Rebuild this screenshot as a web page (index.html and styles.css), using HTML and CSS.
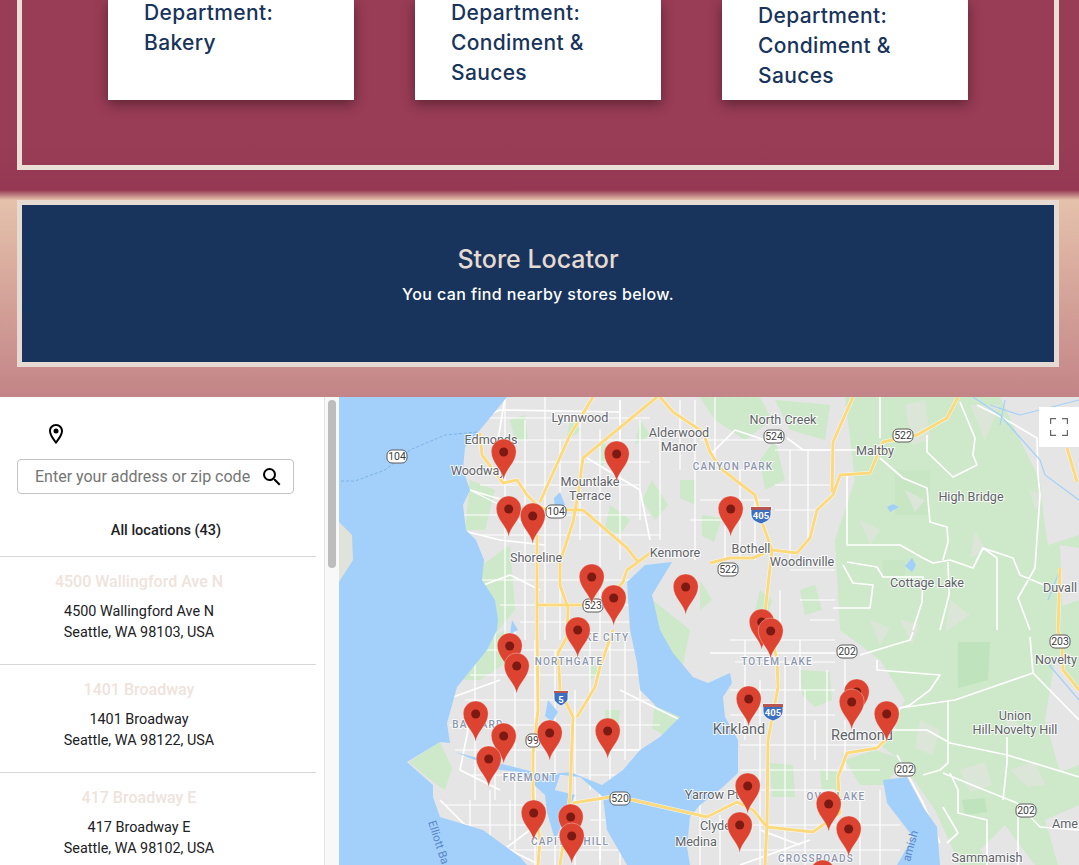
FILE: index.html
```html
<!DOCTYPE html>
<html lang="en">
<head>
<meta charset="utf-8">
<title>Store Locator</title>
<link rel="stylesheet" href="styles.css">
</head>
<body>
<section class="departments">
  <div class="dept-frame">
    <div class="card"><p class="card-text">Department:<br>Bakery</p></div>
    <div class="card"><p class="card-text">Department:<br>Condiment &amp;<br>Sauces</p></div>
    <div class="card"><p class="card-text card-text-low">Department:<br>Condiment &amp;<br>Sauces</p></div>
  </div>
</section>
<section class="locator">
  <div class="locator-frame">
    <h2 class="locator-title">Store Locator</h2>
    <p class="locator-sub">You can find nearby stores below.</p>
  </div>
</section>
<section class="app">
  <aside class="panel">
    <div class="panel-main">
      <div class="panel-pin">
        <svg class="pin-icon" viewBox="0 0 24 24"><path d="M12 2C8.13 2 5 5.13 5 9c0 5.25 7 13 7 13s7-7.75 7-13c0-3.87-3.13-7-7-7zM7 9c0-2.76 2.24-5 5-5s5 2.24 5 5c0 2.88-2.88 7.19-5 9.88C9.92 16.21 7 11.85 7 9z"/><circle cx="12" cy="9" r="2.5"/></svg>
      </div>
      <div class="search">
        <span class="search-text">Enter your address or zip code</span>
        <svg class="search-icon" viewBox="0 0 24 24"><path d="M15.5 14h-.79l-.28-.27A6.47 6.47 0 0 0 16 9.5 6.5 6.5 0 1 0 9.5 16c1.61 0 3.09-.59 4.23-1.57l.27.28v.79l5 4.99L20.49 19l-4.99-5zm-6 0C7.01 14 5 11.99 5 9.5S7.01 5 9.5 5 14 7.01 14 9.5 11.99 14 9.5 14z"/></svg>
      </div>
      <div class="all-locations">All locations (43)</div>
      <ul class="stores">
        <li class="store"><h3 class="store-name">4500 Wallingford Ave N</h3><p class="store-address">4500 Wallingford Ave N<br>Seattle, WA 98103, USA</p></li>
        <li class="store"><h3 class="store-name">1401 Broadway</h3><p class="store-address">1401 Broadway<br>Seattle, WA 98122, USA</p></li>
        <li class="store"><h3 class="store-name">417 Broadway E</h3><p class="store-address">417 Broadway E<br>Seattle, WA 98102, USA</p></li>
      </ul>
    </div>
    <div class="scrolltrack"><div class="scrollthumb"></div></div>
  </aside>
  <div class="map">
    <svg class="map-svg" viewBox="339 397 740 468">
      <defs>
        <g id="pin">
          <path class="pin-body" d="M0 0C-1.5-11-12.5-17-12.5-28.5A12.5 12.5 0 1 1 12.5-28.5C12.5-17 1.5-11 0 0Z"/>
          <circle class="pin-dot" cx="0" cy="-28" r="4.5"/>
        </g>
      </defs>
      <rect class="land" x="339" y="397" width="740" height="468"/>

      <!-- parks and forest -->
      <path class="green" d="M845 397H1000L1020 440L1040 480L1079 500V865H960L935 810L900 760L880 745L905 700L880 660L840 630L835 540L855 480Z"/>
      <path class="green" d="M700 397H760L772 420L745 440L715 420Z"/>
      <path class="green" d="M775 400L830 405L825 440L790 430Z"/>
      <path class="green" d="M800 590L815 585L822 610L805 615ZM760 590L772 600L765 625L755 610Z"/>
      <path class="green" d="M800 670L830 672L832 700L815 707L802 695Z"/>
      <path class="green" d="M770 763L793 765L795 797L772 797ZM820 770L838 772L838 790L822 790Z"/>
      <path class="green" d="M875 750L905 760L885 785L860 785L845 760Z"/>
      <path class="green" d="M640 590L690 630L680 680L660 640Z"/>
      <path class="green" d="M470 480L495 490L485 530L465 530Z"/>
      <path class="green" d="M475 570L510 545L515 610L490 640L478 600Z"/>
      <path class="green" d="M485 640L505 630L510 660L480 680L462 680Z"/>
      <path class="green" d="M409 762L440 742L452 768L445 790L437 785Z"/>
      <path class="green" d="M590 660L600 672L590 680Z"/>
      <path class="green" d="M605 710L620 710L618 730L606 728Z"/>
      <path class="green" d="M655 700L682 716L668 738L652 728Z"/>
      <path class="green" d="M510 420L525 415L528 440L515 440ZM570 420L582 430L566 440ZM610 505L630 520L620 535L605 528ZM600 440L612 450L600 470ZM652 480L668 505L655 520L642 500ZM680 480L695 480L695 505L680 498Z"/>
      <path class="green" d="M640 420L650 435L635 445ZM700 580L712 600L700 610ZM702 515L722 518L714 542L702 536ZM760 460L775 440L785 480L765 490Z"/>
      <path class="deep" d="M958 642H990L988 680L958 688Z"/>
      <path class="deep-soft" d="M895 470L930 470L930 515L895 515Z"/>
      <path class="deep-soft" d="M883 560L905 560L905 575L883 578Z"/>
      <path class="deep" d="M962 800L985 798L987 812L965 815Z"/>

      <!-- open land patches on the forest -->
      <path class="patch" d="M905 405L925 400L930 440L912 445ZM970 405L1000 405L985 440ZM860 520L880 530L870 545ZM975 530L985 550L970 558ZM900 620L920 625L912 645ZM950 600L970 615L945 632ZM960 770L985 762L992 785L970 792ZM920 720L940 730L932 755L915 748ZM1010 770L1035 762L1045 785L1028 787ZM1030 490L1045 496L1035 510ZM905 490L925 500L915 512ZM870 620L890 628L880 645ZM1005 715L1020 725L1008 732Z"/>
      <path class="land" d="M1040 480L1079 500V535L1048 545L1044 520ZM1060 545L1079 548V600L1062 606ZM1055 660L1079 690V765L1060 772L1045 720ZM980 850L1005 825L1035 865H990ZM1045 820L1079 805V865H1058ZM880 830L910 805L905 865H880Z"/>

      <!-- local streets -->
      <path class="street" d="M480 418H650M470 440H660M500 462H650M480 485H640M460 515H650M480 535H660M470 580H640M500 605H640M520 622H640M505 397V640M525 420V640M545 397V640M560 440V640M580 420V540M600 430V640M620 400V560M640 420V520M660 430V540M680 400V470M695 400V560M715 397V470M470 490L500 505L530 530M700 470H770M700 440H770M690 520L740 520M740 470V560M755 500V560M725 500V560M700 500H770M790 450V560M808 450V540M775 450H835M775 485H830M775 510H815"/>
      <path class="street" d="M455 650H660M470 675H650M465 700H655M450 725H660M455 750H650M470 775H640M445 805H540M440 825H530M510 850H640M475 640V800M495 630V800M515 630V850M535 640V865M555 650V865M575 690V865M590 640V790M610 640V800M625 640V760M640 660V750M470 800V830M490 790V840M510 800V840M600 800V865M620 800V865M590 820H640"/>
      <path class="street" d="M730 640H835M735 662H835M730 690H835M730 715H835M740 745H880M740 770H880M740 790H835M740 825H900M740 850H900M760 680V865M785 660V865M805 690V865M827 670V780M845 660V700M845 720V770M860 790V865M880 790V865M745 640V740M800 640V690M680 820V865M700 800V865M720 815V865M815 720V760M790 570H835M800 600H835M810 620H835M780 590V640"/>
      <path class="arterial" d="M787 438L803 450H857M880 397V438M927 435V452L953 477L977 465L973 455L975 438L960 402M880 458L903 478L927 488L930 522L947 527L948 542L943 560M847 473V545H900L923 558L933 563L950 560L973 568L983 548L997 558V630M983 548L1013 558L1020 575L1044 585M977 405L1003 418L1037 438L1038 475L1040 495L1035 568L1018 598L1030 630M847 562L877 567L883 577H923L922 602L913 630M948 562L949 595L940 630M843 565L853 583L873 585L870 608H833"/>
      <path class="arterial" d="M710 653H837M860 655L910 640L913 632M877 660V670L940 675L930 690L910 705L900 708L893 730H927L950 743L1007 755L1050 768L1079 777M900 708L955 700L1033 673M948 700V763L940 770L923 775M943 773L977 787L1017 803L1040 827L1079 830M950 773L958 790V813L987 820V865M958 833L943 807M958 833L947 843M1007 737V763L1003 800M1030 637L1033 673L1079 720M1018 817V865M897 755L923 803L940 843"/>
      <path class="arterial" d="M480 418L500 410L620 412M505 397L498 440M460 530L500 540L545 545M587 458L640 490L650 540M620 400V470M470 590L510 575L540 590M503 500L470 490M710 455L735 430L780 445M445 700L500 680M470 720L460 770L500 790M600 790V860M440 800L470 830L540 865M530 830L490 860M620 690L680 720M605 750H660M640 810L690 820M670 670L710 690M810 840L740 865M760 830L800 845"/>

      <!-- water -->
      <path class="water" d="M339 397H507L480 430L465 447L463 470L470 490L463 505L466 530L476 540L484 560L482 580L495 600L498 620L497 630L487 650L457 687L447 723L450 743L440 742L407 762L433 785L433 797L440 817L483 830L520 857L527 865H339Z"/>
      <path class="island" d="M339 522L352 535L353 560L339 582Z"/>
      <path class="water" d="M627 582L645 565L672 562L652 595L655 608L660 630L673 653L693 677L708 683L730 673L732 683L723 697L725 717L738 740L738 773L723 787L700 805L690 817L687 847L690 865H627L607 830L603 797L580 777L560 775L555 790L575 795L555 840L547 812L545 795L520 772L500 770L475 760L455 752L470 756L510 766L545 775L570 772L602 785L623 770L640 750L660 737L680 717L657 707L640 690L637 663L630 630Z"/>
      <path class="water" d="M883 780L907 777L923 807L937 827L940 865H897L913 837L887 803Z"/>
      <path class="water" d="M548 700L558 712L552 722L545 716Z"/>
      <path class="water" d="M560 492L565 505L555 512L554 498ZM512 620L518 630L510 634ZM887 507L893 504L899 507L890 512ZM912 558L916 565L912 572L905 566Z"/>
      <path class="river" d="M973 397L1000 415L1040 460L1045 475L1079 500M990 405L1020 415L1079 400M1060 570L1048 600M1000 425L1005 400M1045 660L1079 700"/>
      <path class="ferry" d="M341 481H355L385 470L410 450L445 435L478 432"/>

      <!-- highways -->
      <path class="hwy-edge" d="M657 397L583 458L578 495L573 522L560 562L560 585L568 608L567 637L558 653L560 690L573 717L570 797L560 865M537 535V630L538 710L533 753V797L540 840L538 865M480 433L482 455L503 483L517 480L527 495L537 505L547 510H583L627 548L638 562L650 553M537 605H583M660 397L673 412L703 432L710 452L720 468L755 495L763 525L772 550L767 595L765 612L777 660L778 687L768 740L767 823L765 865M710 563L730 558L753 558L772 550L797 553L810 538L817 510L833 495L840 475L870 473L883 442L917 435L947 418L958 397M853 397L833 442L832 492M573 803L610 797L633 800L707 817L737 802L753 810L767 827L813 832L840 813L838 777L847 753L877 748L885 740M1067 448L1077 482M1060 568L1058 630L1062 647L1063 670L1079 690M613 630L600 667L595 687L577 717M583 605H603L623 582L627 570L638 562M593 397L570 435L540 502"/>
      <path class="hwy" d="M657 397L583 458L578 495L573 522L560 562L560 585L568 608L567 637L558 653L560 690L573 717L570 797L560 865M537 535V630L538 710L533 753V797L540 840L538 865M480 433L482 455L503 483L517 480L527 495L537 505L547 510H583L627 548L638 562L650 553M537 605H583M660 397L673 412L703 432L710 452L720 468L755 495L763 525L772 550L767 595L765 612L777 660L778 687L768 740L767 823L765 865M710 563L730 558L753 558L772 550L797 553L810 538L817 510L833 495L840 475L870 473L883 442L917 435L947 418L958 397M853 397L833 442L832 492M573 803L610 797L633 800L707 817L737 802L753 810L767 827L813 832L840 813L838 777L847 753L877 748L885 740M1067 448L1077 482M1060 568L1058 630L1062 647L1063 670L1079 690M613 630L600 667L595 687L577 717M583 605H603L623 582L627 570L638 562M593 397L570 435L540 502"/>

      <!-- labels -->
      <g class="label">
        <text x="580" y="422">Lynnwood</text>
        <text x="491" y="444">Edmonds</text>
        <text x="478" y="475">Woodway</text>
        <text x="590" y="486">Mountlake</text>
        <text x="590" y="500">Terrace</text>
        <text x="679" y="437">Alderwood</text>
        <text x="679" y="451">Manor</text>
        <text x="783" y="424">North Creek</text>
        <text x="875" y="455">Maltby</text>
        <text x="971" y="501">High Bridge</text>
        <text x="927" y="587">Cottage Lake</text>
        <text x="802" y="566">Woodinville</text>
        <text x="751" y="553">Bothell</text>
        <text x="675" y="557">Kenmore</text>
        <text x="536" y="562">Shoreline</text>
        <text x="1060" y="592">Duvall</text>
        <text x="1056" y="664">Novelty</text>
        <text x="1015" y="720">Union</text>
        <text x="1015" y="734">Hill-Novelty Hill</text>
        <text x="712" y="799">Yarrow Pt</text>
        <text x="726" y="830">Clyde Hill</text>
        <text x="696" y="846">Medina</text>
        <text x="987" y="862">Sammamish</text>
        <text x="1065" y="828">Ame</text>
      </g>
      <g class="label label-big">
        <text x="739" y="734">Kirkland</text>
        <text x="862" y="740">Redmond</text>
      </g>
      <g class="hood">
        <text x="733" y="470">CANYON PARK</text>
        <text x="600" y="641">LAKE CITY</text>
        <text x="569" y="665">NORTHGATE</text>
        <text x="777" y="665">TOTEM LAKE</text>
        <text x="478" y="728">BALLARD</text>
        <text x="530" y="781">FREMONT</text>
        <text x="570" y="845">CAPITOL HILL</text>
        <text x="836" y="800">OVERLAKE</text>
        <text x="816" y="862">CROSSROADS</text>
      </g>
      <text class="water-label" transform="translate(428 822) rotate(72)">Elliott Ba</text>
      <text class="water-label" transform="translate(910 862) rotate(-75)">amish</text>

      <!-- route shields -->
      <g class="shield-box">
        <rect x="387" y="450" width="20" height="13" rx="5"/>
        <rect x="546" y="505" width="20" height="13" rx="5"/>
        <rect x="583" y="599" width="20" height="13" rx="5"/>
        <rect x="764" y="430" width="20" height="13" rx="5"/>
        <rect x="893" y="429" width="20" height="13" rx="5"/>
        <rect x="718" y="563" width="20" height="13" rx="5"/>
        <rect x="837" y="645" width="20" height="13" rx="5"/>
        <rect x="1050" y="635" width="20" height="13" rx="5"/>
        <rect x="895" y="763" width="20" height="13" rx="5"/>
        <rect x="1016" y="804" width="20" height="13" rx="5"/>
        <rect x="526" y="734" width="14" height="13" rx="5"/>
        <rect x="610" y="792" width="20" height="13" rx="5"/>
      </g>
      <g class="shield-text">
        <text x="397" y="460">104</text>
        <text x="556" y="515">104</text>
        <text x="593" y="609">523</text>
        <text x="774" y="440">524</text>
        <text x="903" y="439">522</text>
        <text x="728" y="573">522</text>
        <text x="847" y="655">202</text>
        <text x="1060" y="645">203</text>
        <text x="905" y="773">202</text>
        <text x="1026" y="814">202</text>
        <text x="533" y="744">99</text>
        <text x="620" y="802">520</text>
      </g>
      <g class="interstate">
        <path class="i-blue" d="M751 507H771V514C771 520 766 522 761 524C756 522 751 520 751 514Z"/>
        <path class="i-red" d="M751 507H771V510H751Z"/>
        <text x="761" y="519">405</text>
        <path class="i-blue" d="M554 691H568V698C568 702 564 704 561 706C558 704 554 702 554 698Z"/>
        <path class="i-red" d="M554 691H568V693H554Z"/>
        <text x="561" y="703">5</text>
        <path class="i-blue" d="M763 704H783V711C783 717 778 719 773 721C768 719 763 717 763 711Z"/>
        <path class="i-red" d="M763 704H783V707H763Z"/>
        <text x="773" y="716">405</text>
      </g>

      <!-- store pins -->
      <g transform="translate(.7 0)">
        <use href="#pin" x="856" y="720"/>
        <use href="#pin" x="851" y="730"/>
        <use href="#pin" x="886" y="742"/>
        <use href="#pin" x="503" y="480"/>
        <use href="#pin" x="616" y="482"/>
        <use href="#pin" x="508" y="537"/>
        <use href="#pin" x="532" y="544"/>
        <use href="#pin" x="591" y="605"/>
        <use href="#pin" x="613" y="626"/>
        <use href="#pin" x="685" y="615"/>
        <use href="#pin" x="730" y="537"/>
        <use href="#pin" x="761" y="650"/>
        <use href="#pin" x="770" y="659"/>
        <use href="#pin" x="577" y="658"/>
        <use href="#pin" x="509" y="674"/>
        <use href="#pin" x="516" y="694"/>
        <use href="#pin" x="475" y="742"/>
        <use href="#pin" x="503" y="764"/>
        <use href="#pin" x="488" y="787"/>
        <use href="#pin" x="549" y="761"/>
        <use href="#pin" x="607" y="759"/>
        <use href="#pin" x="533" y="841"/>
        <use href="#pin" x="570" y="845"/>
        <use href="#pin" x="571" y="864"/>
        <use href="#pin" x="748" y="727"/>
        <use href="#pin" x="747" y="814"/>
        <use href="#pin" x="739" y="853"/>
        <use href="#pin" x="828" y="832"/>
        <use href="#pin" x="822" y="901"/>
        <use href="#pin" x="848" y="857"/>
      </g>
    </svg>
    <button class="fullscreen" type="button" aria-label="Toggle fullscreen view">
      <svg class="fullscreen-icon" viewBox="0 0 18 18"><path d="M0 6V0H6M12 0H18V6M18 12V18H12M6 18H0V12"/></svg>
    </button>
  </div>
</section>
</body>
</html>
```

FILE: styles.css
```css
* { box-sizing: border-box; }
html, body { margin: 0; padding: 0; }
body {
  width: 1079px;
  height: 865px;
  overflow: hidden;
  background: #fff;
  font-family: "Roboto", "Liberation Sans", sans-serif;
}

/* Departments band, scrolled so that its top is out of the window */
.departments {
  height: 190px;
  padding: 0 20px 0 17px;
  background: linear-gradient(#993c56 0, #993c56 140px, #953853 100%);
}
.dept-frame {
  display: flex;
  gap: 61px;
  height: 170px;
  padding-left: 86px;
  border: 5px solid #e9dfd7;
  border-top: 0;
}
.card {
  width: 246px;
  height: 100px;
  padding-left: 36px;
  background: #fff;
  box-shadow: 0 4px 12px rgba(0, 0, 0, .4);
}
.card-text {
  margin: -2px 0 0;
  color: #18345c;
  font-family: "Inter", "Open Sans", sans-serif;
  font-size: 21px;
  font-weight: 500;
  letter-spacing: .35px;
  line-height: 30px;
}
.card-text-low { margin-top: 1px; }

/* Store locator heading */
.locator {
  height: 207px;
  padding: 10px 20px 0 17px;
  background: linear-gradient(#953853 0, #e5c1ab 10px, #c38487 100%);
}
.locator-frame {
  height: 167px;
  padding-top: 39px;
  border: 5px solid #e6dbd2;
  background: #18345c;
  text-align: center;
}
.locator-title {
  margin: 0;
  color: #e6dbd2;
  font-family: "Inter", "Open Sans", sans-serif;
  font-size: 25px;
  font-weight: 500;
  line-height: 30px;
}
.locator-sub {
  margin: 9px 0 0;
  color: #fff;
  font-family: "Inter", "Open Sans", sans-serif;
  font-size: 16px;
  font-weight: 500;
  letter-spacing: .4px;
  line-height: 22px;
}

/* App: list panel and map */
.app {
  display: flex;
  height: 468px;
}
.panel {
  display: flex;
  flex: 0 0 339px;
  height: 468px;
  overflow: hidden;
  background: #fff;
}
.panel-main { flex: 0 0 316px; }
.panel-pin {
  height: 62px;
  padding: 25px 0 0 44px;
}
.pin-icon {
  display: block;
  width: 24px;
  height: 24px;
  fill: #000;
}
.search {
  display: flex;
  align-items: center;
  justify-content: space-between;
  width: 277px;
  height: 35px;
  margin-left: 17px;
  padding: 0 9px 0 17px;
  border: 1px solid #c4c4c4;
  border-radius: 4px;
}
.search-text {
  color: #757575;
  font-size: 16px;
  white-space: nowrap;
}
.search-icon {
  flex: none;
  width: 24px;
  height: 24px;
  fill: #000;
}
.all-locations {
  height: 63px;
  padding: 28px 0 0 16px;
  border-bottom: 1px solid #d8d8d8;
  color: #202124;
  font-size: 14.5px;
  font-weight: 500;
  line-height: 18px;
  text-align: center;
}
.stores {
  margin: 0;
  padding: 0;
  list-style: none;
}
.store {
  height: 108px;
  padding: 15px 38px 0 0;
  border-bottom: 1px solid #d8d8d8;
  text-align: center;
}
.store-name {
  margin: 0;
  color: #efe3dc;
  font-size: 16px;
  font-weight: 500;
  line-height: 20px;
}
.store-address {
  margin: 9px 0 0;
  color: #202124;
  font-size: 14.4px;
  line-height: 21.4px;
}
.scrolltrack {
  flex: 0 0 15px;
  margin-left: 8px;
  padding: 3px 0 0 3px;
  border-left: 1px solid #e4e4e4;
  background: #f8f8f8;
}
.scrollthumb {
  width: 8px;
  height: 168px;
  border-radius: 4px;
  background: #bdbdbd;
}

.map {
  position: relative;
  flex: 1;
  height: 468px;
  overflow: hidden;
}
.map-svg {
  display: block;
  width: 740px;
  height: 468px;
}
.land { fill: #e5e5e5; }
.green { fill: #cde9c9; }
.deep { fill: #bfe3bc; }
.deep-soft { fill: #c8e6c4; }
.patch { fill: #dce6d8; }
.island { fill: #dfe3da; }
.water { fill: #a3d0fb; }
.river { fill: none; stroke: #a3d0fb; stroke-width: 1.2; }
.ferry { fill: none; stroke: #7fb0e6; stroke-width: 1; stroke-dasharray: 3 2; }
.street { fill: none; stroke: #fff; stroke-width: 1.2; }
.arterial { fill: none; stroke: #fff; stroke-width: 1.7; stroke-linejoin: round; }
.hwy-edge { fill: none; stroke: #fff; stroke-width: 4; stroke-linejoin: round; opacity: .75; }
.hwy { fill: none; stroke: #fbd97c; stroke-width: 3; stroke-linejoin: round; }
.label text {
  fill: #5f6368;
  stroke: rgba(255, 255, 255, .85);
  stroke-width: 2px;
  paint-order: stroke;
  font-family: "Roboto", sans-serif;
  font-size: 12.6px;
  text-anchor: middle;
}
.label-big text { font-size: 14.5px; }
.hood text {
  fill: #8c96ad;
  stroke: rgba(255, 255, 255, .8);
  stroke-width: 2px;
  paint-order: stroke;
  font-family: "Roboto", sans-serif;
  font-size: 10px;
  font-weight: 500;
  letter-spacing: 1.2px;
  text-anchor: middle;
}
.water-label {
  fill: #5a86c8;
  font-family: "Roboto", sans-serif;
  font-size: 11.5px;
}
.shield-box rect { fill: #fff; stroke: #5a5a5a; stroke-width: 1; }
.shield-text text {
  fill: #3c4043;
  font-family: "Roboto", sans-serif;
  font-size: 10.5px;
  text-anchor: middle;
}
.i-blue { fill: #3d6fc0; stroke: #fff; stroke-width: .8; }
.i-red { fill: #b8574f; }
.interstate text {
  fill: #fff;
  font-family: "Roboto", sans-serif;
  font-size: 9.5px;
  font-weight: 700;
  text-anchor: middle;
}
.pin-body { fill: #dc4431; stroke: rgba(255, 255, 255, .55); stroke-width: .6; }
.pin-dot { fill: #7a1a12; }

.fullscreen {
  position: absolute;
  top: 10px;
  right: 0;
  display: flex;
  align-items: center;
  justify-content: center;
  width: 40px;
  height: 40px;
  padding: 0;
  border: 0;
  background: #fff;
}
.fullscreen-icon {
  width: 18px;
  height: 18px;
  fill: none;
  stroke: #666;
  stroke-width: 2.4;
}
```
